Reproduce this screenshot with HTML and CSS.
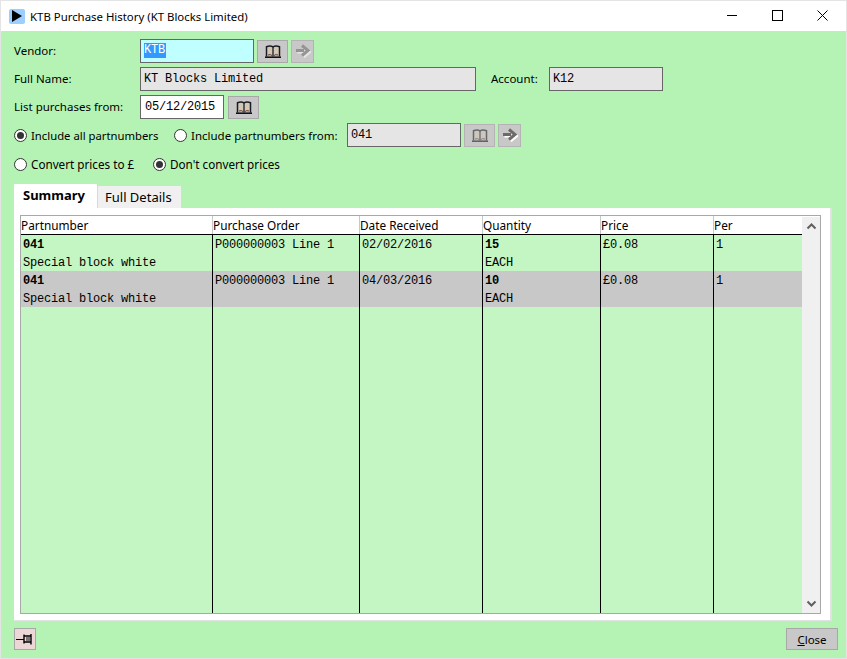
FILE: index.html
```html
<!DOCTYPE html>
<html lang="en">
<head>
<meta charset="utf-8">
<title>KTB Purchase History</title>
<link rel="stylesheet" href="styles.css">
</head>
<body>
<svg class="defs" width="0" height="0" aria-hidden="true">
  <symbol id="book" viewBox="0 0 16 13">
    <path d="M1.500 11.500V1.800Q5 .2 8 1.800Q11 .2 14.500 1.800V11.500" fill="#cfc8b4" stroke="#1c1c24" stroke-width="1.500"/>
    <path d="M8 1.800V11.500" stroke="#1c1c24" stroke-width="1.300"/>
    <path d="M0 12.200H16" stroke="#10101e" stroke-width="1.600"/>
    <path d="M3 10Q5.500 9 7 10.500M9 10.500Q10.500 9 13 10" fill="none" stroke="#703030" stroke-width="1"/>
  </symbol>
  <symbol id="arrow" viewBox="0 0 16 14">
    <path d="M1 6.500H9M7 1.500L13 6.500L7 11.500" fill="none" stroke="#fff" stroke-width="3" transform="translate(1.500 1.500)"/>
    <path d="M1 6.500H9M7 1.500L13 6.500L7 11.500" fill="none" stroke="#6e6a68" stroke-width="3"/>
  </symbol>
</svg>
<div class="window">
  <header class="titlebar">
    <span class="appicon"><svg width="12" height="12" viewBox="0 0 12 12"><path d="M1 0L11 6L1 12Z" fill="#000"/></svg></span>
    <span class="title">KTB Purchase History (KT Blocks Limited)</span>
    <span class="winbtns">
      <svg width="12" height="12" viewBox="0 0 12 12"><path d="M0 5.500H10" stroke="#000"/></svg>
      <svg width="12" height="12" viewBox="0 0 12 12"><rect x=".5" y=".5" width="10" height="10" fill="none" stroke="#000"/></svg>
      <svg width="12" height="12" viewBox="0 0 12 12"><path d="M.5 .5L10.500 10.500M10.500 .5L.5 10.500" stroke="#000"/></svg>
    </span>
  </header>
  <main class="content">
    <div class="row row-vendor">
      <label class="label label-w">Vendor:</label>
      <div class="field field-vendor"><span class="sel">KTB</span></div>
      <button class="tool book"><svg width="16" height="13"><use href="#book"/></svg></button>
      <button class="tool arrow off"><svg width="16" height="14"><use href="#arrow"/></svg></button>
    </div>
    <div class="row row-name">
      <label class="label label-w">Full Name:</label>
      <div class="field ro field-name">KT Blocks Limited</div>
      <label class="label label-acc">Account:</label>
      <div class="field ro field-acc">K12</div>
    </div>
    <div class="row row-list">
      <label class="label label-w">List purchases from:</label>
      <div class="field field-date">05/12/2015</div>
      <button class="tool book"><svg width="16" height="13"><use href="#book"/></svg></button>
    </div>
    <div class="row row-radio1">
      <span class="radio on"></span><span class="label r1">Include all partnumbers</span>
      <span class="radio"></span><span class="label r2">Include partnumbers from:</span>
      <div class="field ro field-part">041</div>
      <button class="tool book off"><svg width="16" height="13"><use href="#book"/></svg></button>
      <button class="tool arrow"><svg width="16" height="14"><use href="#arrow"/></svg></button>
    </div>
    <div class="row row-radio2">
      <span class="radio"></span><span class="label r3">Convert prices to £</span>
      <span class="radio on"></span><span class="label">Don't convert prices</span>
    </div>
    <div class="tabs">
      <div class="tab active">Summary</div>
      <div class="tab">Full Details</div>
    </div>
    <section class="panel">
      <div class="grid">
        <div class="table">
          <div class="cols head">
            <div>Partnumber</div><div>Purchase Order</div><div>Date Received</div><div>Quantity</div><div>Price</div><div>Per</div>
          </div>
          <div class="cols rec">
            <div><b>041</b><br>Special block white</div><div>P000000003 Line 1</div><div>02/02/2016</div><div><b>15</b><br>EACH</div><div>£0.08</div><div>1</div>
          </div>
          <div class="cols rec alt">
            <div><b>041</b><br>Special block white</div><div>P000000003 Line 1</div><div>04/03/2016</div><div><b>10</b><br>EACH</div><div>£0.08</div><div>1</div>
          </div>
          <div class="cols filler"><div></div><div></div><div></div><div></div><div></div><div></div></div>
        </div>
        <div class="scroll">
          <svg width="11" height="7" viewBox="0 0 11 7"><path d="M1.500 5.500L5.500 1.500L9.500 5.500" fill="none" stroke="#606060" stroke-width="2"/></svg>
          <svg width="11" height="7" viewBox="0 0 11 7"><path d="M1.500 1.500L5.500 5.500L9.500 1.500" fill="none" stroke="#606060" stroke-width="2"/></svg>
        </div>
      </div>
    </section>
    <footer class="bottom">
      <button class="pin"><svg width="18" height="12" viewBox="0 0 18 12"><path d="M0 6.500H8" stroke="#000"/><path d="M8 1.500V10.500M8.500 3H15V9H8.500M15 1V11.500" fill="none" stroke="#000" stroke-width="1.400"/><rect x="10" y="4" width="4" height="4" fill="#777"/></svg></button>
      <button class="close"><u>C</u>lose</button>
    </footer>
  </main>
</div>
</body>
</html>
```
FILE: styles.css
```css
html, body { margin: 0; padding: 0; }
body { width: 847px; height: 659px; overflow: hidden; background: #e4e4e4; font-family: "Noto Sans", sans-serif; font-size: 11.5px; color: #000; }
.defs { position: absolute; }
.window { height: 658px; margin: 1px 1px 0 1px; display: flex; flex-direction: column; }
.titlebar { height: 30px; flex: none; background: #fff; display: flex; align-items: center; padding-left: 8px; }
.appicon { width: 16px; height: 15px; background: #9ccfff; border-radius: 2px; display: flex; align-items: center; justify-content: center; margin-right: 5px; }
.appicon svg { margin-left: -1px; }
.title { font-size: 11.4px; }
.winbtns { margin-left: auto; display: flex; gap: 33px; padding-right: 17px; }
.content { flex: 1; background: #b5f3b5; padding: 8px 8px 8px 13px; display: flex; flex-direction: column; min-height: 0; margin-bottom: 1px; }
.row { display: flex; align-items: center; }
.row-vendor { height: 24px; }
.row-name { height: 24px; margin-top: 4px; }
.row-list { height: 24px; margin-top: 4px; }
.row-radio1 { height: 24px; margin-top: 4px; }
.row-radio2 { height: 16px; margin-top: 9px; }
.label { font-size: 11.5px; white-space: nowrap; }
.r1 { font-size: 11.3px; }
.row-radio2 .label { font-size: 11.7px; }
.label-w { width: 126px; padding-bottom: 2px; }
.label-acc { width: 58px; margin-left: 15px; padding-bottom: 2px; }
.field { box-sizing: border-box; height: 24px; border: 1px solid #666; background: #fff; font-family: "Liberation Mono", monospace; font-size: 12px; letter-spacing: -.2px; line-height: 21px; padding: 1px 0 0 3px; white-space: nowrap; }
.ro { background: #e5e5e5; }
.field-vendor { width: 114px; background: #c0ffff; padding-top: 3px; }
.sel { background: #3399ff; color: #fff; display: block; width: 22px; height: 15px; line-height: 15px; }
.field-name { width: 336px; }
.field-acc { width: 114px; }
.field-date { width: 84px; padding-left: 4px; }
.field-part { width: 114px; }
.tool { box-sizing: border-box; height: 23px; padding: 0; margin: 0 0 0 3px; border: 1px solid #b4b4b4; background: #c8c8c8; display: flex; align-items: center; justify-content: center; }
.tool.book { width: 31px; }
.tool.arrow { width: 23px; }
.row-vendor .book { border-color: #a8a8a8; }
.row-list .book { margin-left: 4px; border-color: #a8a8a8; }
.off svg { opacity: .55; }
.radio { box-sizing: border-box; width: 13px; height: 13px; border-radius: 50%; border: 1px solid #333; background: #fff; margin-right: 4px; display: flex; align-items: center; justify-content: center; flex: none; }
.radio.on::after { content: ""; width: 7px; height: 7px; border-radius: 50%; background: #333; }
.r1 { width: 143px; }
.r2 { width: 156px; }
.row-radio2 .r3 { width: 122px; }
.tabs { display: flex; margin-top: 12px; height: 24px; align-items: flex-end; gap: 1px; flex: none; }
.tab { background: #f0f0f0; height: 22px; width: 83px; box-sizing: border-box; padding-left: 7px; line-height: 23px; font-size: 13px; }
.tab.active { background: #fff; height: 24px; padding-left: 9px; font-weight: 700; line-height: 22px; }
.panel { flex: 1; min-height: 0; background: #fff; width: 818px; box-sizing: border-box; padding: 7px 9px 6px 6px; border-right: 2px solid #e2e2e2; border-bottom: 1px solid #e2e2e2; }
.grid { height: 100%; box-sizing: border-box; border: 1px solid #a8a8a8; display: flex; background: #c4f6c4; }
.table { flex: 1; display: flex; flex-direction: column; min-width: 0; }
.cols { display: grid; grid-template-columns: 192px 147px 123px 118px 113px 1fr; }
.cols > div { border-right: 1px solid #000; box-sizing: border-box; }
.cols > div:last-child { border-right: 0; }
.head { background: #fff; border-bottom: 1px solid #000; height: 18px; line-height: 19px; font-size: 11.8px; }
.head > div { border-right: 1px solid #c8c8c8; overflow: hidden; white-space: nowrap; }
.rec { height: 36px; font-family: "Liberation Mono", monospace; font-size: 12px; letter-spacing: -.2px; line-height: 18px; }
.rec > div { padding: 1px 0 0 2px; white-space: nowrap; }
.alt { background: #c8c8c8; }
.filler { flex: 1; }
.scroll { width: 18px; flex: none; background: #f0f0f0; display: flex; flex-direction: column; justify-content: space-between; align-items: center; padding: 6px 0; box-sizing: border-box; border-top: 1px solid #fff; }
.bottom { flex: none; display: flex; justify-content: space-between; margin-top: 7px; height: 22px; }
.pin { box-sizing: border-box; width: 22px; height: 22px; padding: 0; border: 1px solid #a8a8a8; background: #ecd6d6; display: flex; align-items: center; justify-content: center; }
.close { box-sizing: border-box; width: 52px; height: 22px; padding: 0; border: 1px solid #a8a8a8; background: #c8c8c8; font-family: "Noto Sans", sans-serif; font-size: 11.5px; }
```
